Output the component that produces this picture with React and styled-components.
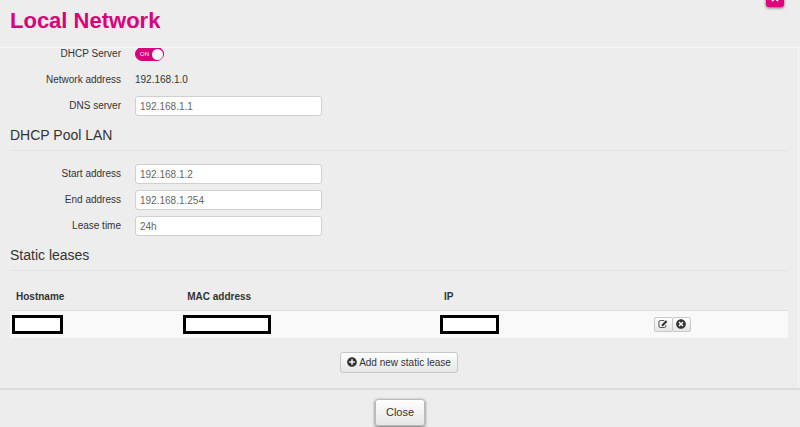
import React, { useState } from 'react'
import styled, { createGlobalStyle } from 'styled-components'
import { FaTimes, FaTimesCircle, FaPlusCircle } from 'react-icons/fa'

const fields = [
    { id: 'start', label: 'Start address', value: '192.168.1.2' },
    { id: 'end', label: 'End address', value: '192.168.1.254' },
    { id: 'lease', label: 'Lease time', value: '24h' },
]

const leases = [{ id: 1, host: 51, mac: 88, ip: 59 }]

const EditIcon = () => (
    <svg viewBox="0 0 16 16" width="10" height="10" fill="none" stroke="#333" aria-hidden="true">
        <path d="M10 2.5H3.5a2 2 0 0 0-2 2v7a2 2 0 0 0 2 2h7a2 2 0 0 0 2-2V10" strokeWidth="1.4" />
        <path d="M6 11V8.6L12.6 2l2.4 2.4L8.4 11z" fill="#333" stroke="none" />
    </svg>
)

const App = () => {
    const [dhcp, setDhcp] = useState(true)

    return (
        <>
            <GlobalStyle />
            <Modal>
                <Header>
                    <Title>Local Network</Title>
                    <CloseCorner aria-label="Close window">
                        <FaTimes />
                    </CloseCorner>
                </Header>

                <Body>
                    <Group>
                        <Row>
                            <Label htmlFor="dhcp">DHCP Server</Label>
                            <Switch>
                                <input
                                    id="dhcp"
                                    type="checkbox"
                                    checked={dhcp}
                                    onChange={(e) => setDhcp(e.target.checked)}
                                />
                                <span>{dhcp ? 'ON' : 'OFF'}</span>
                                <Knob />
                            </Switch>
                        </Row>
                        <Row>
                            <Label as="span">Network address</Label>
                            <span>192.168.1.0</span>
                        </Row>
                        <Row>
                            <Label htmlFor="dns">DNS server</Label>
                            <Input id="dns" defaultValue="192.168.1.1" />
                        </Row>
                    </Group>

                    <Heading>DHCP Pool LAN</Heading>
                    <Group>
                        {fields.map((f) => (
                            <Row key={f.id}>
                                <Label htmlFor={f.id}>{f.label}</Label>
                                <Input id={f.id} defaultValue={f.value} />
                            </Row>
                        ))}
                    </Group>

                    <Heading>Static leases</Heading>
                    <Table>
                        <thead>
                            <tr>
                                <Th $width="22%">Hostname</Th>
                                <Th $width="33%">MAC address</Th>
                                <Th $width="27%">IP</Th>
                                <Th as="td" />
                            </tr>
                        </thead>
                        <tbody>
                            {leases.map((l) => (
                                <tr key={l.id}>
                                    <Td><Redacted $width={l.host} /></Td>
                                    <Td><Redacted $width={l.mac} /></Td>
                                    <Td><Redacted $width={l.ip} /></Td>
                                    <Td>
                                        <Actions>
                                            <IconButton aria-label="Edit"><EditIcon /></IconButton>
                                            <IconButton aria-label="Delete"><FaTimesCircle /></IconButton>
                                        </Actions>
                                    </Td>
                                </tr>
                            ))}
                        </tbody>
                    </Table>

                    <AddButton>
                        <FaPlusCircle />
                        Add new static lease
                    </AddButton>
                </Body>

                <Footer>
                    <CloseButton>Close</CloseButton>
                </Footer>
            </Modal>
        </>
    )
}

export default App


const GlobalStyle = createGlobalStyle`
    * {
        box-sizing: border-box;
    }

    body {
        margin: 0;
        background: #ededed;
        color: #333;
        font-family: "Liberation Sans", Arial, sans-serif;
        font-size: 10px;
        line-height: 20px;
        overflow: hidden;
    }

    button, input {
        font-family: inherit;
        color: inherit;
    }
`;

const Modal = styled.main`
    display: flex;
    flex-direction: column;
`;

const Header = styled.header`
    position: relative;
    padding: 6px 10px 11px;
    border-bottom: 1px solid #f8f8f8;
`;

const Title = styled.h1`
    margin: 0;
    color: #d9007b;
    font-size: 22px;
    line-height: 30px;
`;

// hangs over the top edge of the modal
const CloseCorner = styled.button`
    position: absolute;
    top: -11px;
    right: 16px;
    display: flex;
    align-items: center;
    justify-content: center;
    width: 18px;
    height: 18px;
    padding: 0;
    border: 0;
    border-radius: 3px;
    background: #e2007f;
    color: #fff;
    font-size: 10px;
    box-shadow: 0 1px 3px rgba(0, 0, 0, 0.6);
    cursor: pointer;
`;

// the content is scrolled a little under the header
const Body = styled.section`
    display: flex;
    flex-direction: column;
    overflow: hidden;
    margin-right: 1px;
    padding: 0 10px 15px;
    border-right: 1px solid #f6f6f6;

    & > :first-child {
        margin-top: -4px;
    }
`;

const Group = styled.div`
    display: flex;
    flex-direction: column;
    gap: 6px;
`;

const Row = styled.div`
    display: grid;
    grid-template-columns: 111px 187px;
    column-gap: 14px;
    align-items: center;
    min-height: 20px;
`;

const Label = styled.label`
    text-align: right;
`;

const Input = styled.input`
    width: 100%;
    height: 20px;
    padding: 0 4px;
    border: 1px solid #d0d0d0;
    border-radius: 3px;
    background: #fff;
    color: #666;
    font-size: 10px;
`;

const Switch = styled.label`
    position: relative;
    display: flex;
    align-items: center;
    justify-content: space-between;
    width: 29px;
    height: 14px;
    padding-left: 4px;
    border: 1px solid #d9007b;
    border-radius: 7px;
    background: #d9007b;
    color: #fff;
    font-size: 6px;
    cursor: pointer;

    input {
        position: absolute;
        inset: 0;
        margin: 0;
        opacity: 0;
    }
`;

const Knob = styled.i`
    width: 11px;
    height: 11px;
    border-radius: 50%;
    background: #fff;
`;

const Heading = styled.h2`
    margin: 5px 0 13px;
    border-bottom: 1px solid #e4e4e4;
    font-size: 14px;
    font-weight: normal;
    line-height: 29px;
`;

const Table = styled.table`
    width: 100%;
    border-collapse: collapse;
    table-layout: fixed;

    tbody tr {
        background: #f9f9f9;
    }
`;

const Th = styled.th`
    width: ${({ $width }) => $width || 'auto'};
    padding: 3px 6px;
    text-align: left;
`;

const Td = styled.td`
    height: 27px;
    padding: 0 2px;
    border-top: 1px solid #ddd;
`;

const Redacted = styled.div`
    width: ${({ $width }) => $width}px;
    height: 19px;
    border: 3px solid #000;
    background: #fff;
`;

const Actions = styled.div`
    display: flex;
    padding-left: 4px;
`;

const Button = styled.button`
    display: flex;
    align-items: center;
    justify-content: center;
    border: 1px solid #c8c8c8;
    border-radius: 3px;
    background: linear-gradient(#fff, #e6e6e6);
    font-size: 10px;
    cursor: pointer;
`;

const IconButton = styled(Button)`
    width: 19px;
    height: 15px;
    padding: 0;
    border-radius: 2px;

    & + & {
        margin-left: -1px;
    }
`;

const AddButton = styled(Button)`
    align-self: center;
    gap: 2px;
    height: 21px;
    margin-top: 14px;
    padding: 0 6px;
`;

const Footer = styled.footer`
    display: flex;
    justify-content: center;
    padding: 9px 10px;
    border-top: 2px solid #dadada;
`;

const CloseButton = styled(Button)`
    height: 27px;
    padding: 0 10px;
    border-color: #bbb;
    font-size: 11px;
    box-shadow: 0 1px 3px rgba(0, 0, 0, 0.6);
`;
